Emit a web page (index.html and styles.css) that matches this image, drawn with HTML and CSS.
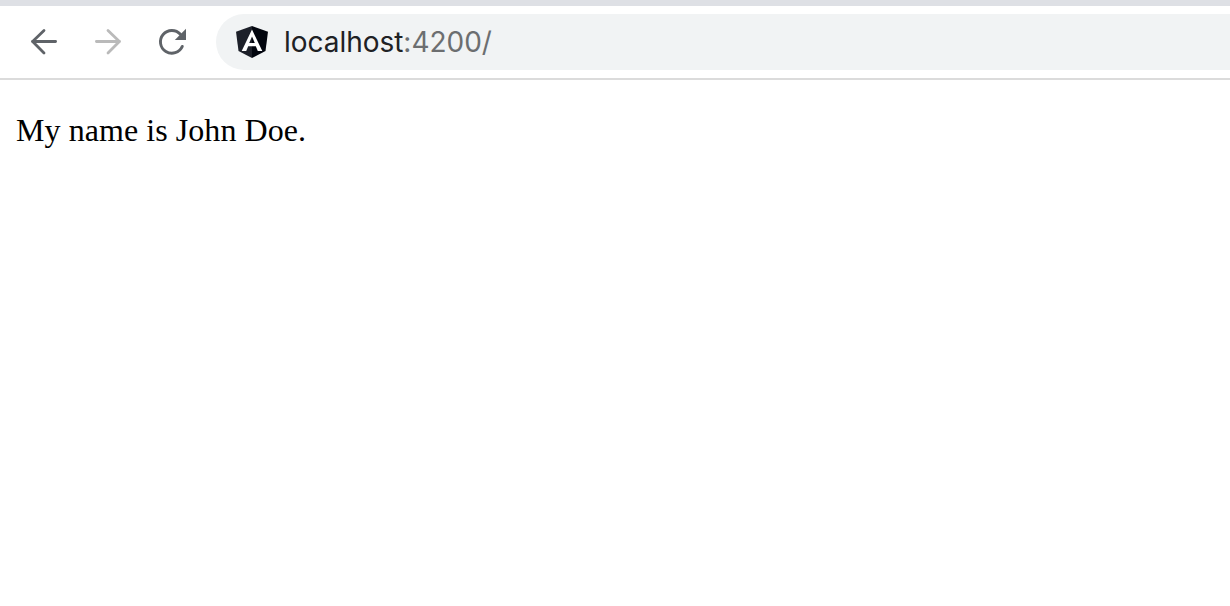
FILE: index.html
```html
<!DOCTYPE html>
<html lang="en">
<head>
<meta charset="utf-8">
<title>localhost:4200</title>
<link rel="stylesheet" href="styles.css">
</head>
<body>
<header class="toolbar">
  <nav class="nav">
    <svg class="icon" viewBox="0 0 32 32"><path d="M27.6 15.5H4.4M16 4.5L4.6 15.5 16 26.9"/></svg>
    <svg class="icon icon-disabled" viewBox="0 0 32 32"><path d="M4.4 15.5h23.2M16 4.5l11.4 11L16 26.9"/></svg>
    <svg class="icon" viewBox="0 0 32 32"><path class="arc" d="M24.4 8.3A11.4 11.4 0 1 0 26.3 20.4"/><path class="tip" d="M30 2.8V14H18.8z"/></svg>
  </nav>
  <div class="address">
    <svg class="logo" viewBox="0 0 32 32"><path fill="#1d2029" d="M16 0L0 5.7l2.5 19.2L16 32z"/><path fill="#02050e" d="M16 0l16 5.7-2.5 19.2L16 32z"/><path fill="#fff" fill-rule="evenodd" d="M16 3.6L5.7 25.1h4.5l2-4.8h7.6l2 4.8h4.5zM16 10.4l2.8 6.7h-5.6z"/></svg>
    <div class="url"><span class="host">localhost</span><span class="port">:4200/</span></div>
  </div>
</header>
<main class="content"><p class="message">My name is John Doe.</p></main>
</body>
</html>
```

FILE: styles.css
```css
body {
  margin: 0;
  background: #fff;
  overflow: hidden;
}

.toolbar {
  box-sizing: border-box;
  height: 80px;
  padding-top: 8px;
  border-top: 6px solid #dee0e5;
  border-bottom: 2px solid #dbdbdb;
  display: flex;
}

.nav {
  display: flex;
  align-items: center;
  gap: 32px;
  height: 56px;
  padding: 0 28px;
}

.icon {
  width: 32px;
  height: 32px;
  fill: none;
  stroke: #5f6368;
  stroke-width: 2.8;
  stroke-linecap: round;
  stroke-linejoin: round;
}

.icon-disabled {
  stroke: #bababa;
}

.arc {
  stroke-width: 2.9;
}

.tip {
  fill: #5f6368;
  stroke: none;
}

.address {
  box-sizing: border-box;
  flex: 1;
  height: 56px;
  padding-left: 20px;
  border-radius: 28px 0 0 28px;
  background: #f1f3f4;
  display: flex;
  align-items: center;
  gap: 16px;
}

.logo {
  width: 32px;
  height: 32px;
}

.url {
  font: 28px/40px Inter, sans-serif;
  letter-spacing: -0.03px;
  white-space: nowrap;
}

.host {
  color: #202124;
}

.port {
  color: #6c6e70;
}

.content {
  padding: 32px 16px;
}

.message {
  margin: 0;
  font: 32px/36px "Liberation Serif", serif;
  letter-spacing: 0.06px;
  color: #000;
}
```
